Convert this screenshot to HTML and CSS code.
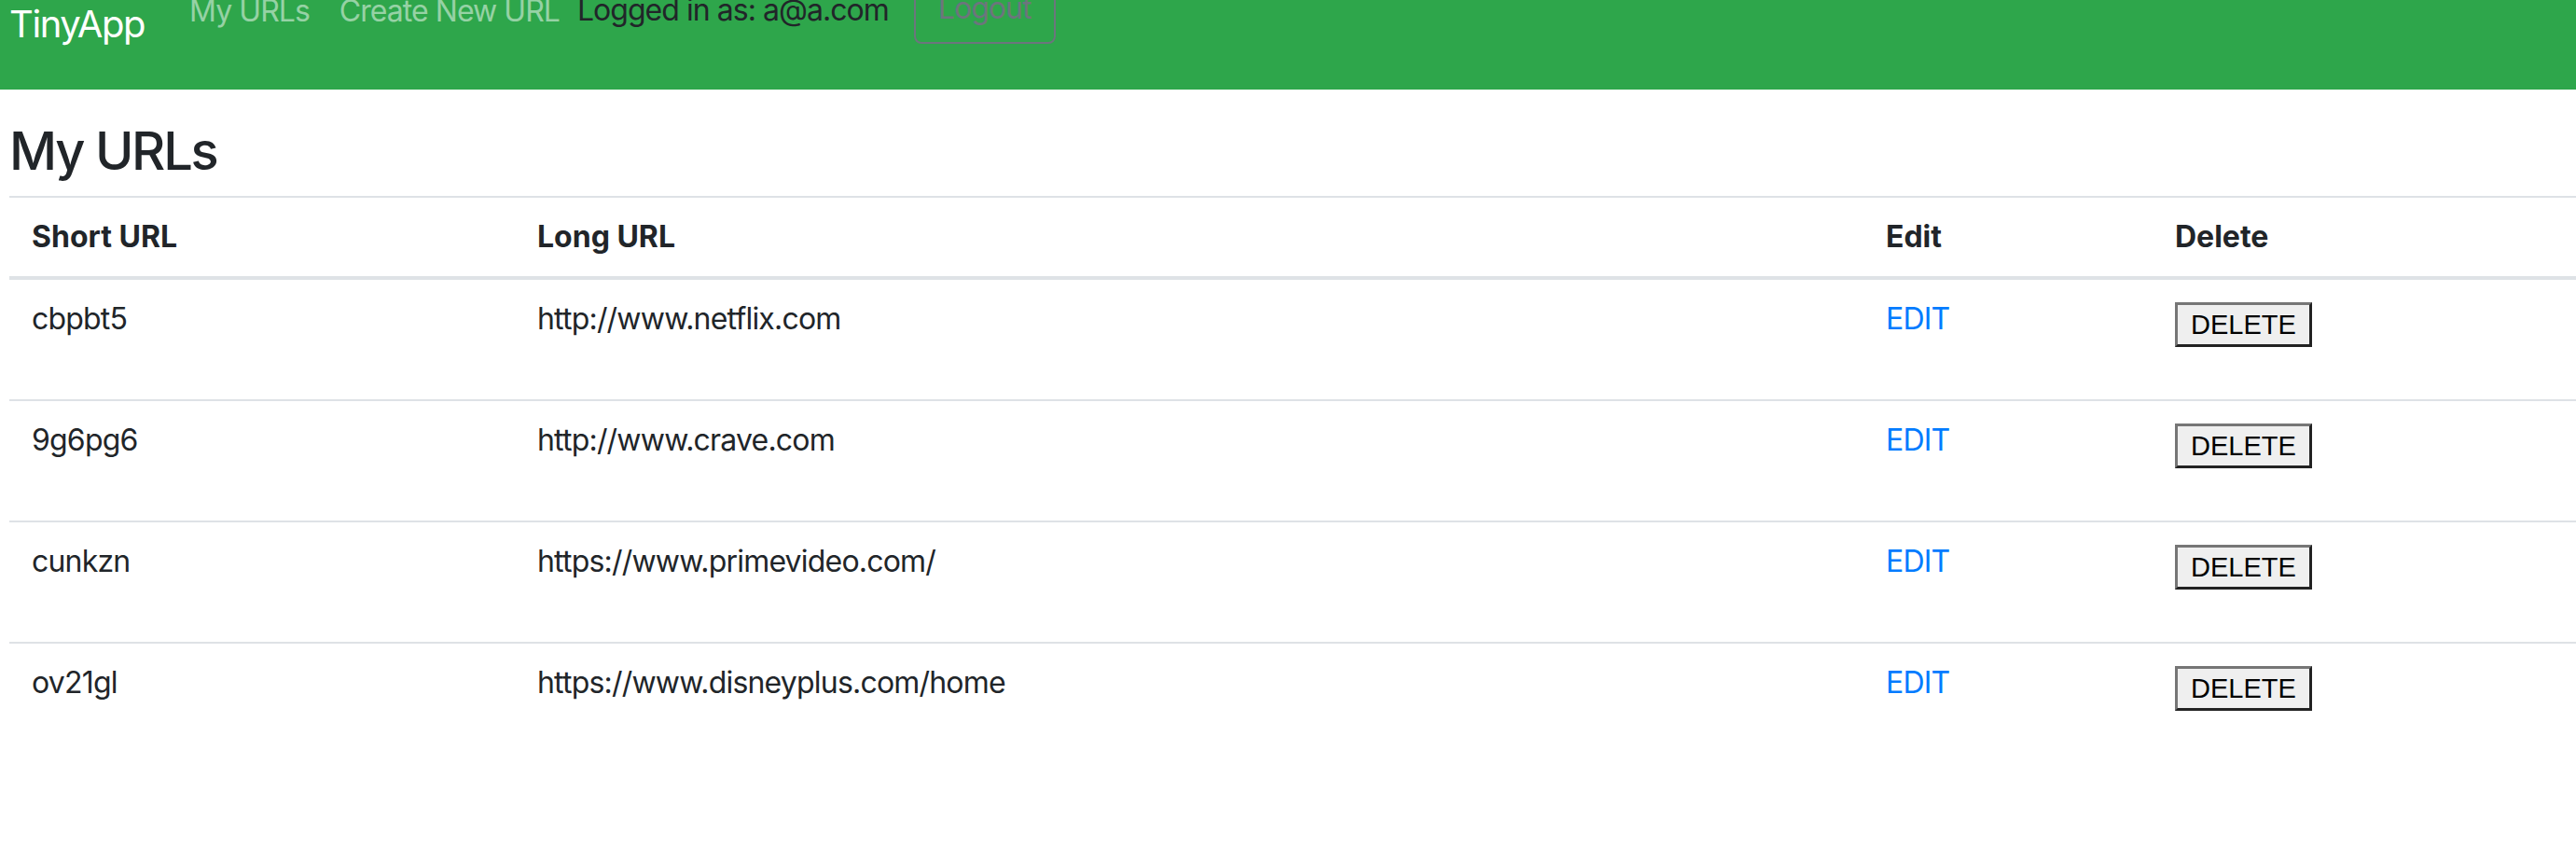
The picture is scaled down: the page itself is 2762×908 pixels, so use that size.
FILE: index.html
```html
<!DOCTYPE html>
<html lang="en">
<head>
<meta charset="utf-8">
<title>TinyApp</title>
<link rel="stylesheet" href="styles.css">
</head>
<body>
<nav class="navbar">
  <a class="brand" href="#">TinyApp</a>
  <ul class="nav-links">
    <li><a href="#">My URLs</a></li>
    <li><a href="#">Create New URL</a></li>
  </ul>
  <span class="login">Logged in as: a@a.com</span>
  <button class="logout" type="button">Logout</button>
</nav>
<main>
  <h3 class="title">My URLs</h3>
  <table class="urls">
    <colgroup>
      <col class="c1"><col class="c2"><col class="c3"><col class="c4">
    </colgroup>
    <thead>
      <tr><th>Short URL</th><th>Long URL</th><th>Edit</th><th>Delete</th></tr>
    </thead>
    <tbody>
      <tr>
        <td>cbpbt5</td><td>http://www.netflix.com</td>
        <td><a class="edit" href="#">EDIT</a></td>
        <td><form class="del-form"><button class="del" type="button">DELETE</button></form></td>
      </tr>
      <tr>
        <td>9g6pg6</td><td>http://www.crave.com</td>
        <td><a class="edit" href="#">EDIT</a></td>
        <td><form class="del-form"><button class="del" type="button">DELETE</button></form></td>
      </tr>
      <tr>
        <td>cunkzn</td><td>https://www.primevideo.com/</td>
        <td><a class="edit" href="#">EDIT</a></td>
        <td><form class="del-form"><button class="del" type="button">DELETE</button></form></td>
      </tr>
      <tr>
        <td>ov21gl</td><td>https://www.disneyplus.com/home</td>
        <td><a class="edit" href="#">EDIT</a></td>
        <td><form class="del-form"><button class="del" type="button">DELETE</button></form></td>
      </tr>
    </tbody>
  </table>
</main>
</body>
</html>
```
FILE: styles.css
```css
html, body {
  margin: 0;
  padding: 0;
  background: #fff;
}
body {
  font-family: Inter, "Noto Sans", sans-serif;
  color: #212529;
  font-size: 32px;
  line-height: 36px;
  letter-spacing: -0.025em;
  overflow: hidden;
}
.navbar {
  display: flex;
  align-items: flex-start;
  height: 96px;
  background: #2ea64b;
  padding-left: 10px;
  overflow: hidden;
}
.brand {
  margin-top: 2px;
  font-size: 40px;
  line-height: 48px;
  letter-spacing: -0.035em;
  color: #fff;
  text-decoration: none;
  margin-right: 32px;
}
.nav-links {
  display: flex;
  list-style: none;
  margin: -6px 0 0 0;
  padding: 0;
}
.nav-links a {
  display: block;
  padding: 0 16px;
  font-size: 32px;
  line-height: 36px;
  letter-spacing: -0.03em;
  color: rgba(255, 255, 255, 0.5);
  text-decoration: none;
}
.login {
  margin-top: -7px;
  margin-left: 3px;
  font-size: 32px;
  line-height: 36px;
  letter-spacing: -0.03em;
  color: #212529;
}
.logout {
  margin-top: -29px;
  margin-left: 27px;
  border: 2px solid #6c757d;
  border-radius: 8px;
  padding: 12px 24px;
  font-family: Inter, "Noto Sans", sans-serif;
  font-size: 32px;
  line-height: 48px;
  letter-spacing: -0.03em;
  color: #6c757d;
  background: transparent;
}
.title {
  margin: 33px 0 14px 10px;
  font-size: 56px;
  line-height: 67px;
  font-weight: 500;
  letter-spacing: -0.04em;
}
.urls {
  margin-left: 10px;
  width: 2752px;
  table-layout: fixed;
  border-collapse: collapse;
}
.c1 { width: 542px; }
.c2 { width: 1446px; }
.c3 { width: 310px; }
.c4 { width: 454px; }
.urls th,
.urls td {
  padding: 24px;
  text-align: left;
  border-top: 2px solid #dee2e6;
  vertical-align: top;
}
.urls th {
  font-weight: 700;
  letter-spacing: 0;
  vertical-align: bottom;
  border-bottom: 4px solid #dee2e6;
}
.edit {
  color: #007bff;
  text-decoration: none;
}
.del-form {
  margin: 0 0 32px 0;
}
.del {
  display: block;
  box-sizing: border-box;
  height: 48px;
  padding: 0 14px;
  border-style: solid;
  border-width: 3px;
  border-color: #767676 #222 #222 #767676;
  background: #efefef;
  color: #000;
  font-family: "Liberation Sans", Arial, sans-serif;
  font-size: 29px;
  line-height: 42px;
  letter-spacing: 0;
}
```
